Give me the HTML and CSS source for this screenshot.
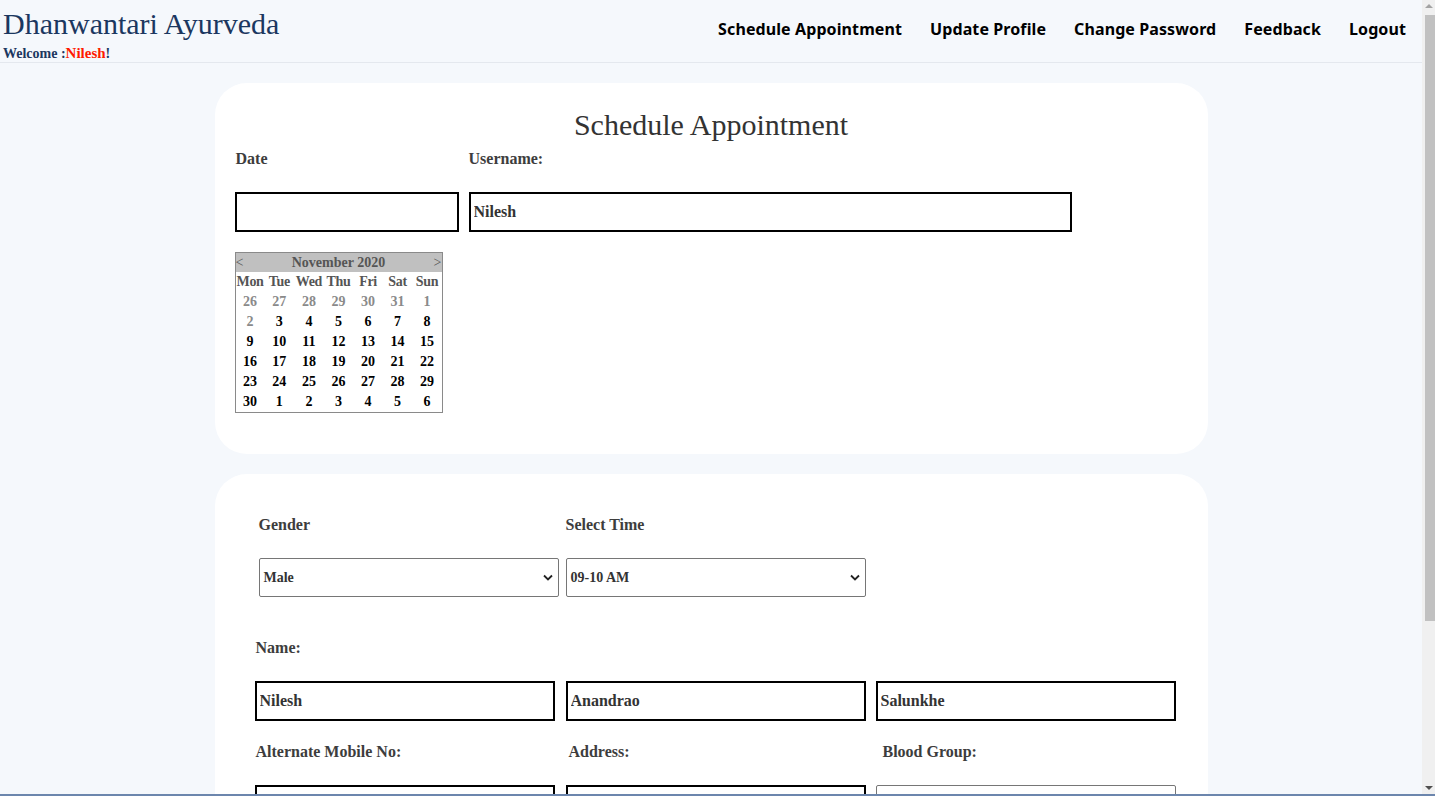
FILE: index.html
```html
<!DOCTYPE html>
<html lang="en">
<head>
<meta charset="utf-8">
<title>Schedule Appointment</title>
<link rel="stylesheet" href="styles.css">
</head>
<body>
<div class="page">
<header class="topbar">
  <div class="brand">
    <div class="brand-name">Dhanwantari Ayurveda</div>
    <div class="welcome">Welcome :<span class="user">Nilesh</span>!</div>
  </div>
  <nav class="nav">
    <a href="#">Schedule Appointment</a>
    <a href="#">Update Profile</a>
    <a href="#">Change Password</a>
    <a href="#">Feedback</a>
    <a href="#">Logout</a>
  </nav>
</header>

<main class="main">
  <section class="card card-top">
    <h2 class="title">Schedule Appointment</h2>
    <div class="row-labels">
      <label class="lbl lbl-date">Date</label>
      <label class="lbl">Username:</label>
    </div>
    <div class="row-inputs">
      <input class="field field-date" type="text" value="">
      <input class="field field-user" type="text" value="Nilesh">
    </div>
    <table class="cal">
      <thead>
        <tr class="cal-head">
          <th class="cal-nav">&lt;</th>
          <th colspan="5">November 2020</th>
          <th class="cal-nav cal-right">&gt;</th>
        </tr>
        <tr class="cal-days">
          <th>Mon</th><th>Tue</th><th>Wed</th><th>Thu</th><th>Fri</th><th>Sat</th><th>Sun</th>
        </tr>
      </thead>
      <tbody>
        <tr class="other"><td>26</td><td>27</td><td>28</td><td>29</td><td>30</td><td>31</td><td>1</td></tr>
        <tr><td class="other">2</td><td>3</td><td>4</td><td>5</td><td>6</td><td>7</td><td>8</td></tr>
        <tr><td>9</td><td>10</td><td>11</td><td>12</td><td>13</td><td>14</td><td>15</td></tr>
        <tr><td>16</td><td>17</td><td>18</td><td>19</td><td>20</td><td>21</td><td>22</td></tr>
        <tr><td>23</td><td>24</td><td>25</td><td>26</td><td>27</td><td>28</td><td>29</td></tr>
        <tr><td>30</td><td>1</td><td>2</td><td>3</td><td>4</td><td>5</td><td>6</td></tr>
      </tbody>
    </table>
  </section>

  <section class="card card-form">
    <div class="grid2">
      <label class="lbl">Gender</label>
      <label class="lbl">Select Time</label>
      <div class="sel"><span>Male</span><svg width="10" height="7" viewBox="0 0 10 7"><path d="M1 1.5 L5 5.5 L9 1.5" fill="none" stroke="#222" stroke-width="1.8"/></svg></div>
      <div class="sel"><span>09-10 AM</span><svg width="10" height="7" viewBox="0 0 10 7"><path d="M1 1.5 L5 5.5 L9 1.5" fill="none" stroke="#222" stroke-width="1.8"/></svg></div>
    </div>

    <label class="lbl lbl-name">Name:</label>
    <div class="grid3">
      <input class="field" type="text" value="Nilesh">
      <input class="field" type="text" value="Anandrao">
      <input class="field" type="text" value="Salunkhe">
      <label class="lbl lbl-sub">Alternate Mobile No:</label>
      <label class="lbl lbl-sub lbl-addr">Address:</label>
      <label class="lbl lbl-sub lbl-blood">Blood Group:</label>
      <input class="field" type="text" value="">
      <input class="field" type="text" value="">
      <div class="sel sel-blood"><span></span></div>
    </div>
  </section>
</main>
</div>

<div class="scrollbar" aria-hidden="true">
  <div class="sb-up"></div>
  <div class="sb-thumb"></div>
  <div class="sb-down"></div>
</div>
<div class="taskstrip" aria-hidden="true"></div>
</body>
</html>
```

FILE: styles.css
```css
html, body {
  margin: 0;
  padding: 0;
}
body {
  background: #f5f8fc;
  font-family: "Liberation Serif", "Times New Roman", serif;
  color: #333;
  overflow: hidden;
}
.page {
  margin-right: 13px;
}
.topbar {
  display: flex;
  justify-content: space-between;
  align-items: flex-start;
  height: 62px;
  border-bottom: 1px solid #e4e8ee;
}
.brand {
  padding-left: 3px;
}
.brand-name {
  font-family: "Liberation Serif", serif;
  font-size: 30px;
  line-height: 30px;
  margin-top: 9px;
  color: #1b3760;
}
.welcome {
  font-size: 14px;
  font-weight: bold;
  color: #1b3760;
  margin-top: 6px;
  line-height: 16px;
}
.welcome .user {
  color: #ff1a00;
  font-size: 15px;
}
.nav {
  display: flex;
  gap: 28px;
  padding-right: 16px;
  padding-top: 18px;
}
.nav a {
  font-family: "Noto Sans", "Open Sans", sans-serif;
  font-weight: 700;
  font-size: 16px;
  letter-spacing: 0.1px;
  color: #000;
  text-decoration: none;
}
.main {
  width: 993px;
  margin: 20px auto 0;
  display: flex;
  flex-direction: column;
  gap: 20px;
}
.card {
  background: #fff;
  border-radius: 32px;
}
.card-top {
  padding: 20px 20px 41px;
}
.title {
  font-family: "Liberation Serif", serif;
  font-weight: normal;
  font-size: 30px;
  color: #333;
  text-align: center;
  margin: 6px 0 0;
  line-height: 32px;
}
.lbl {
  font-weight: bold;
  font-size: 16px;
  color: #3d3d3d;
  display: block;
}
.row-labels {
  display: flex;
  margin-top: 9px;
  line-height: 18px;
}
.lbl-date {
  width: 233px;
  margin-left: 1px;
}
.row-inputs {
  display: flex;
  gap: 10px;
  margin-top: 24px;
}
.field {
  box-sizing: border-box;
  height: 40px;
  border: 2px solid #000;
  background: #fff;
  font-family: "Liberation Serif", serif;
  font-weight: bold;
  font-size: 16px;
  color: #333;
  padding: 0 3px;
  margin: 0;
}
.field-date {
  width: 224px;
}
.field-user {
  width: 603px;
}
.cal {
  margin-top: 20px;
  border: 1px solid #8a8a8a;
  border-collapse: collapse;
  table-layout: fixed;
  width: 208px;
  font-size: 14px;
  font-weight: bold;
  color: #000;
}
.cal th, .cal td {
  padding: 0;
  height: 20px;
  text-align: center;
  line-height: 20px;
}
.cal-head th {
  background: #c0c0c0;
  color: #555;
  height: 19px;
  line-height: 19px;
}
.cal-nav {
  text-align: left !important;
  font-weight: normal;
}
.cal-right {
  text-align: right !important;
}
.cal-days th {
  color: #555;
  letter-spacing: -0.3px;
}
.cal .other, .cal tr.other td {
  color: #8a8a8a;
}
.card-form {
  padding: 42px 32px 40px 40px;
  min-height: 400px;
}
.grid2 {
  display: grid;
  grid-template-columns: 300px 300px;
  column-gap: 7px;
  row-gap: 24px;
  margin-left: 4px;
}
.grid2 .lbl {
  line-height: 18px;
}
.sel {
  box-sizing: border-box;
  height: 39px;
  border: 1px solid #767676;
  border-radius: 2px;
  background: #fff;
  display: flex;
  align-items: center;
  justify-content: space-between;
  padding: 0 5px 0 4px;
  font-weight: bold;
  font-size: 14px;
  color: #333;
}
.lbl-name {
  margin-top: 42px;
  margin-left: 1px;
  line-height: 18px;
}
.grid3 {
  display: grid;
  grid-template-columns: 311px 310px 300px;
  margin-top: 24px;
}
.grid3 .field, .grid3 .sel {
  width: 300px;
}
.lbl-sub {
  margin-top: 22px;
  margin-bottom: 24px;
  line-height: 18px;
  margin-left: 1px;
}
.lbl-addr {
  margin-left: 3px;
}
.lbl-blood {
  margin-left: 7px;
}
.sel-blood {
  height: 40px;
}
.scrollbar {
  position: fixed;
  top: 0;
  right: 0;
  width: 13px;
  height: 100%;
  background: #f0f0f0;
}
.sb-up {
  position: absolute;
  top: 4px;
  right: 2px;
  width: 0;
  height: 0;
  border-left: 4px solid transparent;
  border-right: 4px solid transparent;
  border-bottom: 4px solid #a3a3a3;
}
.sb-thumb {
  position: absolute;
  top: 15px;
  right: 0;
  width: 10px;
  height: 606px;
  background: #c1c1c1;
}
.sb-down {
  position: absolute;
  bottom: 6px;
  right: 2px;
  width: 0;
  height: 0;
  border-left: 4px solid transparent;
  border-right: 4px solid transparent;
  border-top: 4px solid #505050;
}
.taskstrip {
  position: fixed;
  left: 0;
  bottom: 0;
  width: 100%;
  height: 2px;
  background: #6c86ad;
}
```
